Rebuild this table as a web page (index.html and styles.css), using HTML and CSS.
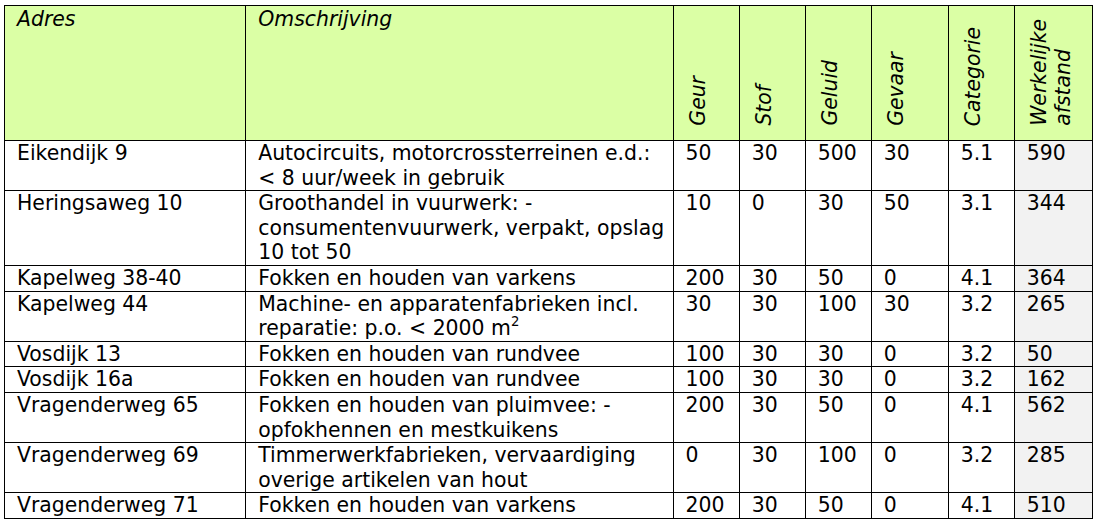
FILE: index.html
```html
<!DOCTYPE html>
<html lang="nl">
<head>
<meta charset="utf-8">
<title>Bedrijven</title>
<link rel="stylesheet" href="styles.css">
</head>
<body>
<table class="tbl">
  <colgroup>
    <col class="c-adres">
    <col class="c-omschr">
    <col class="c-n">
    <col class="c-n">
    <col class="c-n">
    <col class="c-w">
    <col class="c-n">
    <col class="c-w2">
  </colgroup>
  <thead>
    <tr class="head">
      <th class="top">Adres</th>
      <th class="top">Omschrijving</th>
      <th class="rot"><div class="vt">Geur</div></th>
      <th class="rot"><div class="vt">Stof</div></th>
      <th class="rot"><div class="vt">Geluid</div></th>
      <th class="rot"><div class="vt">Gevaar</div></th>
      <th class="rot"><div class="vt">Categorie</div></th>
      <th class="rot"><div class="vt">Werkelijke<br>afstand</div></th>
    </tr>
  </thead>
  <tbody>
    <tr>
      <td>Eikendijk 9</td>
      <td>Autocircuits, motorcrossterreinen e.d.:<br>&lt; 8 uur/week in gebruik</td>
      <td>50</td><td>30</td><td>500</td><td>30</td><td>5.1</td><td class="grey">590</td>
    </tr>
    <tr>
      <td>Heringsaweg 10</td>
      <td>Groothandel in vuurwerk: -<br>consumentenvuurwerk, verpakt, opslag<br>10 tot 50</td>
      <td>10</td><td>0</td><td>30</td><td>50</td><td>3.1</td><td class="grey">344</td>
    </tr>
    <tr>
      <td>Kapelweg 38-40</td>
      <td>Fokken en houden van varkens</td>
      <td>200</td><td>30</td><td>50</td><td>0</td><td>4.1</td><td class="grey">364</td>
    </tr>
    <tr>
      <td>Kapelweg 44</td>
      <td>Machine- en apparatenfabrieken incl.<br>reparatie: p.o. &lt; 2000 m<sup>2</sup></td>
      <td>30</td><td>30</td><td>100</td><td>30</td><td>3.2</td><td class="grey">265</td>
    </tr>
    <tr>
      <td>Vosdijk 13</td>
      <td>Fokken en houden van rundvee</td>
      <td>100</td><td>30</td><td>30</td><td>0</td><td>3.2</td><td class="grey">50</td>
    </tr>
    <tr>
      <td>Vosdijk 16a</td>
      <td>Fokken en houden van rundvee</td>
      <td>100</td><td>30</td><td>30</td><td>0</td><td>3.2</td><td class="grey">162</td>
    </tr>
    <tr>
      <td>Vragenderweg 65</td>
      <td>Fokken en houden van pluimvee: -<br>opfokhennen en mestkuikens</td>
      <td>200</td><td>30</td><td>50</td><td>0</td><td>4.1</td><td class="grey">562</td>
    </tr>
    <tr>
      <td>Vragenderweg 69</td>
      <td>Timmerwerkfabrieken, vervaardiging<br>overige artikelen van hout</td>
      <td>0</td><td>30</td><td>100</td><td>0</td><td>3.2</td><td class="grey">285</td>
    </tr>
    <tr>
      <td>Vragenderweg 71</td>
      <td>Fokken en houden van varkens</td>
      <td>200</td><td>30</td><td>50</td><td>0</td><td>4.1</td><td class="grey">510</td>
    </tr>
  </tbody>
</table>
</body>
</html>
```
FILE: styles.css
```css
html, body {
  margin: 0;
  padding: 0;
  background: #ffffff;
}
body {
  padding: 5px 0 0 4px;
  font-family: "DejaVu Sans", Verdana, sans-serif;
  font-size: 20.4px;
  color: #000;
}
.tbl {
  border-collapse: collapse;
  table-layout: fixed;
  width: 1089px;
}
.c-adres { width: 241px; }
.c-omschr { width: 427px; }
.c-n { width: 66px; }
.c-w { width: 77px; }
.c-w2 { width: 78px; }

.tbl th, .tbl td {
  border: 1px solid #000;
  padding: 0 4px 0 12px;
  line-height: 24.6px;
  text-align: left;
  vertical-align: top;
  white-space: nowrap;
  overflow: hidden;
}
.tbl th {
  font-weight: normal;
  font-style: italic;
  background: #dbffa5;
}
.head {
  height: 135px;
}
.tbl th.top {
  vertical-align: top;
  padding-top: 1px;
}
.tbl th.rot {
  vertical-align: bottom;
  padding-bottom: 14px;
}
.vt {
  writing-mode: vertical-rl;
  transform: rotate(180deg);
  line-height: 24px;
  white-space: nowrap;
}
.tbl td.grey {
  background: #f2f2f2;
}
sup {
  font-size: 0.65em;
  line-height: 0;
  vertical-align: 0.65em;
}
```
